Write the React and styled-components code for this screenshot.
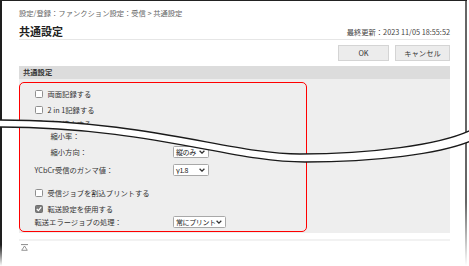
import styled, { createGlobalStyle } from "styled-components";

const GlobalStyle = createGlobalStyle`
  html, body { margin: 0; padding: 0; background: #fff; }
  body {
    font-family: "Noto Sans CJK JP", "Noto Sans", sans-serif;
    color: #333;
  }
`;

const Page = styled.div`
  position: relative;
  width: 469px;
  height: 266px;
  overflow: hidden;
  background: #fff;
`;

const Frame = styled.div`
  position: relative;
  width: 467px;
  height: 266px;
  box-sizing: border-box;
  border-top: 1.5px solid #222;
  padding: 0 17px 0 19px;
  display: flex;
  flex-direction: column;

  &::before,
  &::after {
    content: "";
    position: absolute;
    top: 0;
    bottom: 0;
    width: 2px;
  }
  &::before {
    left: 0;
    background: linear-gradient(to bottom, #1e1e1e 92%, rgba(30, 30, 30, 0));
  }
  &::after {
    right: 0;
    background: linear-gradient(to bottom, #666 76%, rgba(102, 102, 102, 0));
  }
`;

const Crumbs = styled.div`
  margin-top: 6.5px;
  font-size: 7.3px;
  line-height: 10px;
  color: #666;
`;

const TitleRow = styled.div`
  margin-top: 6px;
  height: 14px;
  padding-bottom: 1px;
  border-bottom: 1.5px solid #e6e6e6;
  display: flex;
  align-items: center;
  justify-content: space-between;
`;

const Title = styled.h1`
  margin: 0;
  font-size: 11px;
  line-height: 14px;
  font-weight: 700;
  color: #222;
`;

const Updated = styled.span`
  font-size: 7.3px;
  line-height: 10px;
  color: #444;
  padding-top: 2px;
`;

const ButtonBar = styled.div`
  margin-top: 5.5px;
  display: flex;
  justify-content: flex-end;
  gap: 6px;
`;

const Button = styled.button`
  width: ${(p) => p.$w}px;
  height: 16px;
  padding: 0;
  box-sizing: border-box;
  border: 1px solid #d4d4d4;
  background: #ececec;
  font-family: inherit;
  font-size: 7.3px;
  color: #333;
`;

const SectionHead = styled.div`
  margin-top: 5px;
  height: 13px;
  padding-left: 4px;
  background: #dcdcdc;
  font-size: 7.3px;
  font-weight: 700;
  line-height: 13px;
  color: #333;
`;

const Panel = styled.div`
  height: 154px;
  background: #eeeeee;
  padding-top: 3px;
  box-sizing: border-box;
`;

const Marked = styled.div`
  width: 288px;
  margin-left: -0.5px;
  box-sizing: border-box;
  border: 1.5px solid #ff0000;
  border-radius: 5px;
  padding: 2.5px 0 4.5px 15px;
`;

const Row = styled.div`
  height: ${(p) => p.$h}px;
  margin-top: ${(p) => p.$mt || 0}px;
  padding-left: ${(p) => (p.$indent ? 16 : 0)}px;
  display: flex;
  align-items: center;
  font-size: 7.3px;
  color: #333;
  white-space: nowrap;
`;

const Box = styled.span`
  width: 8px;
  height: 8px;
  box-sizing: border-box;
  margin-right: 5px;
  border: 1px solid ${(p) => (p.$on ? "#6f6f6f" : "#8f8f8f")};
  border-radius: 1.5px;
  background: ${(p) => (p.$on ? "#7c7c7c" : "#fff")};
  display: flex;
  align-items: center;
  justify-content: center;
`;

const Label = styled.span`
  width: ${(p) => (p.$indent ? 122 : 138)}px;
  flex-shrink: 0;
`;

const Select = styled.div`
  width: ${(p) => p.$w}px;
  height: 12px;
  box-sizing: border-box;
  border: 1px solid #a8a8a8;
  border-radius: 1.5px;
  background: #fff;
  padding: 0 3px 0 2.5px;
  display: flex;
  align-items: center;
  justify-content: space-between;
  font-size: 7px;
  letter-spacing: -0.4px;
  color: #222;
`;

const FootLine = styled.div`
  margin-top: 6px;
  height: 2px;
  background: #f2f2f2;
`;

const TopLink = styled.div`
  margin: 3px 0 0 2px;
  width: 7px;
  height: 7px;
  display: flex;
`;

const Cut = styled.svg`
  position: absolute;
  left: 0;
  top: 0;
  pointer-events: none;
`;

const Check = ({ on }) => (
  <Box $on={on}>
    {on && (
      <svg width="6" height="6" viewBox="0 0 6 6">
        <polyline points="0.8,3 2.4,4.6 5.2,1.2" fill="none" stroke="#fff" strokeWidth="1.2" />
      </svg>
    )}
  </Box>
);

const Drop = ({ w, children }) => (
  <Select $w={w}>
    <span>{children}</span>
    <svg width="6" height="4" viewBox="0 0 6 4">
      <polyline points="0.6,0.7 3,3.1 5.4,0.7" fill="none" stroke="#333" strokeWidth="1.3" />
    </svg>
  </Select>
);

const upper = "M-2,120 C150,120 230,154 300,154 C370,154 440,145 471,130";
const lower = "M-2,127 C150,127 230,162 305,162 C375,162 440,154 471,141";
const band =
  upper + " L471,141 C440,154 375,162 305,162 C230,162 150,127 -2,127 Z";

export default function App() {
  return (
    <Page>
      <GlobalStyle />
      <Frame>
        <Crumbs>設定/登録：ファンクション設定：受信 &gt; 共通設定</Crumbs>
        <TitleRow>
          <Title>共通設定</Title>
          <Updated>最終更新：2023 11/05 18:55:52</Updated>
        </TitleRow>
        <ButtonBar>
          <Button $w={51}>OK</Button>
          <Button $w={55}>キャンセル</Button>
        </ButtonBar>
        <SectionHead>共通設定</SectionHead>
        <Panel>
          <Marked>
            <Row $h={16}>
              <Check />
              両面記録する
            </Row>
            <Row $h={16}>
              <Check />2 in 1記録する
            </Row>
            <Row $h={13}>
              <Check />
              受信縮小する
            </Row>
            <Row $h={10} $indent>
              <Label $indent>縮小率：</Label>
            </Row>
            <Row $h={23} $indent>
              <Label $indent>縮小方向：</Label>
              <Drop w={36}>縦のみ</Drop>
            </Row>
            <Row $h={13}>
              <Label>YCbCr受信のガンマ値：</Label>
              <Drop w={36}>γ1.8</Drop>
            </Row>
            <Row $h={16} $mt={8}>
              <Check />
              受信ジョブを割込プリントする
            </Row>
            <Row $h={16}>
              <Check on />
              転送設定を使用する
            </Row>
            <Row $h={10}>
              <Label>転送エラージョブの処理：</Label>
              <Drop w={53}>常にプリント</Drop>
            </Row>
          </Marked>
        </Panel>
        <FootLine />
        <TopLink>
          <svg width="7" height="7" viewBox="0 0 7 7">
            <line x1="0" y1="0.6" x2="7" y2="0.6" stroke="#8a8a8a" strokeWidth="1" />
            <polygon points="3.5,2 0.7,6.3 6.3,6.3" fill="none" stroke="#8a8a8a" strokeWidth="0.9" />
          </svg>
        </TopLink>
      </Frame>
      <Cut width="469" height="266" viewBox="0 0 469 266">
        <path d={band} fill="#fff" />
        <path d={upper} fill="none" stroke="#1a1a1a" strokeWidth="1.3" />
        <path d={lower} fill="none" stroke="#1a1a1a" strokeWidth="1.3" />
      </Cut>
    </Page>
  );
}
